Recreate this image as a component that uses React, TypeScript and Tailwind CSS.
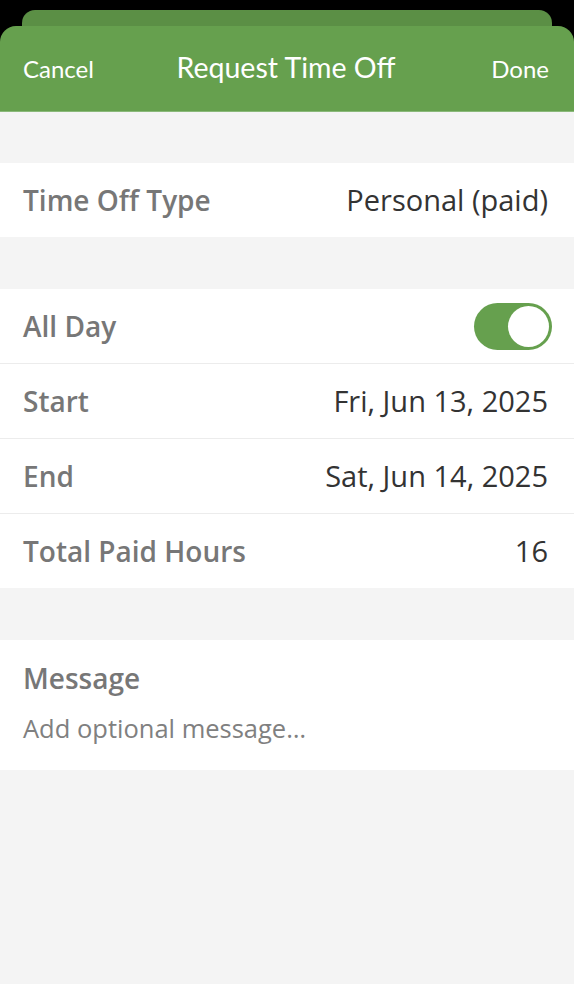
import React from "react";

const font = { fontFamily: "Lato, 'Open Sans', sans-serif" };

function Row({ label, value, last }: { label: string; value?: React.ReactNode; last?: boolean }) {
  return (
    <div className={`flex items-center justify-between pl-[23px] pr-[26px] bg-white ${last ? "h-[74px]" : "h-[75px] border-b border-[#ececec]"}`}>
      <span className="text-[28px] font-semibold text-[#777777] font-['Open_Sans',sans-serif]">{label}</span>
      {typeof value === "string" ? (
        <span className="text-[29px] text-[#333333] font-['Open_Sans',sans-serif]">{value}</span>
      ) : (
        value
      )}
    </div>
  );
}

function Toggle() {
  return (
    <div className="relative h-[47px] w-[78px] rounded-full bg-[#66a04e] -mr-[4px]">
      <div className="absolute right-[3px] top-[3px] h-[41px] w-[41px] rounded-full bg-white" />
    </div>
  );
}

export default function App() {
  return (
    <div className="min-h-[984px] w-[574px] bg-black" style={font}>
      <div className="pt-[10px]">
        <div className="mx-[22px] h-[30px] rounded-t-[13px] bg-[#5b8f45]" />
      </div>
      <div className="-mt-[14px] rounded-t-[16px] bg-[#66a04e] h-[86px] grid grid-cols-[1fr_auto_1fr] items-center px-[23px] text-white border-b border-[#8ab97a]">
        <span className="text-[24px] justify-self-start">Cancel</span>
        <span className="text-[28.5px] -mt-[3px] -ml-[2px]">Request Time Off</span>
        <span className="text-[24px] pr-[2px] justify-self-end">Done</span>
      </div>
      <div className="bg-[#f4f4f4] min-h-[872px]">
        <div className="h-[51px]" />
        <Row label="Time Off Type" value="Personal (paid)" last />
        <div className="h-[52px]" />
        <div>
          <Row label="All Day" value={<Toggle />} />
          <Row label="Start" value="Fri, Jun 13, 2025" />
          <Row label="End" value="Sat, Jun 14, 2025" />
          <Row label="Total Paid Hours" value="16" last />
        </div>
        <div className="h-[52px]" />
        <div className="bg-white h-[130px] pl-[23px] pt-[17px]">
          <div className="text-[28px] font-semibold text-[#777777] font-['Open_Sans',sans-serif]">Message</div>
          <div className="text-[25.5px] text-[#808080] mt-[10px] font-['Open_Sans',sans-serif]">Add optional message…</div>
        </div>
      </div>
    </div>
  );
}
